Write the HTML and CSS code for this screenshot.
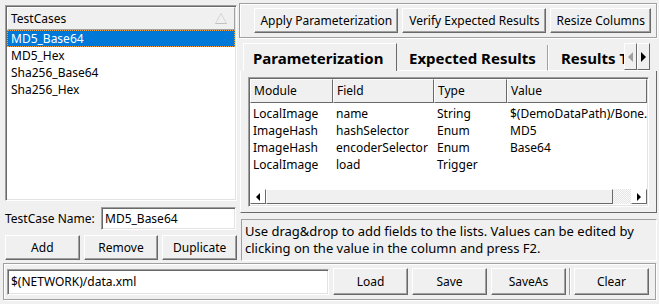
FILE: index.html
```html
<!DOCTYPE html>
<html lang="en">
<head>
    <meta charset="UTF-8">
    <title>Test Cases</title>
    <link rel="stylesheet" href="styles.css">
</head>
<body>
    <div class="app">
        <div class="top">
            <div class="left">
                <div class="listbox">
                    <div class="list-head">TestCases<span class="sort"></span></div>
                    <div class="list">
                        <div class="row selected">MD5_Base64</div>
                        <div class="row">MD5_Hex</div>
                        <div class="row">Sha256_Base64</div>
                        <div class="row">Sha256_Hex</div>
                    </div>
                </div>
                <div class="name-row">
                    <label for="tcName">TestCase Name:</label>
                    <input class="entry" id="tcName" type="text" value="MD5_Base64">
                </div>
                <div class="btn-row">
                    <button class="btn">Add</button>
                    <button class="btn">Remove</button>
                    <button class="btn">Duplicate</button>
                </div>
            </div>

            <div class="right">
                <div class="toolbar">
                    <button class="btn wide">Apply Parameterization</button>
                    <button class="btn wide">Verify Expected Results</button>
                    <button class="btn">Resize Columns</button>
                </div>

                <div class="notebook">
                    <div class="tabs">
                        <div class="tab active">Parameterization</div>
                        <div class="tab">Expected Results</div>
                        <div class="tab last">Results Table</div>
                        <div class="tab-arrows">
                            <span class="arrow prev off"></span>
                            <span class="arrow next"></span>
                        </div>
                    </div>
                    <div class="pane">
                        <div class="table">
                            <div class="thead">
                                <div class="th c1">Module</div>
                                <div class="th c2">Field</div>
                                <div class="th c3">Type</div>
                                <div class="th c4">Value</div>
                            </div>
                            <div class="tbody">
                                <div class="tr"><span class="c1">LocalImage</span><span class="c2">name</span><span class="c3">String</span><span class="c4">$(DemoDataPath)/Bone.</span></div>
                                <div class="tr"><span class="c1">ImageHash</span><span class="c2">hashSelector</span><span class="c3">Enum</span><span class="c4">MD5</span></div>
                                <div class="tr"><span class="c1">ImageHash</span><span class="c2">encoderSelector</span><span class="c3">Enum</span><span class="c4">Base64</span></div>
                                <div class="tr"><span class="c1">LocalImage</span><span class="c2">load</span><span class="c3">Trigger</span><span class="c4"></span></div>
                            </div>
                            <div class="hscroll">
                                <span class="sbtn prev"></span>
                                <span class="thumb"></span>
                                <span class="track"></span>
                                <span class="sbtn next"></span>
                            </div>
                        </div>
                    </div>
                </div>

                <div class="info">Use drag&amp;drop to add fields to the lists. Values can be edited by clicking on the value in the column and press F2.</div>
            </div>
        </div>

        <div class="bottom">
            <input class="entry path" type="text" value="$(NETWORK)/data.xml">
            <button class="btn file">Load</button>
            <button class="btn file">Save</button>
            <button class="btn file">SaveAs</button>
            <span class="sep"></span>
            <button class="btn file">Clear</button>
        </div>
    </div>
</body>
</html>
```

FILE: styles.css
```css
body {
    margin: 0;
    background-color: #f0f0f0;
    font-family: 'Noto Sans', 'Open Sans', sans-serif;
    font-size: 12px;
    color: #000;
}
.app {
    width: 659px;
    height: 304px;
    overflow: hidden;
}
.top {
    display: flex;
    height: 263px;
}

/* buttons and entries, windows classic look */
.btn {
    font: inherit;
    color: #000;
    background-color: #f0f0f0;
    height: 25px;
    padding: 0 6px;
    border: 1px solid;
    border-color: #fff #696969 #696969 #fff;
    box-shadow: inset -1px -1px 0 #a0a0a0;
    cursor: pointer;
}
.entry {
    font: inherit;
    color: #000;
    background-color: #fff;
    box-sizing: border-box;
    padding: 0 3px;
    border: 1px solid;
    border-color: #a0a0a0 #fff #fff #a0a0a0;
    box-shadow: inset 1px 1px 0 #696969, inset -1px -1px 0 #e3e3e3;
    outline: none;
}

/* left column */
.left {
    width: 232px;
    padding: 5px 2px 0 5px;
    display: flex;
    flex-direction: column;
    flex-shrink: 0;
}
.listbox {
    height: 196px;
    box-sizing: border-box;
    background-color: #fff;
    border: 1px solid;
    border-color: #a0a0a0 #fff #fff #a0a0a0;
    box-shadow: inset 1px 1px 0 #696969, inset -1px -1px 0 #e3e3e3;
    padding: 1px;
}
.list-head {
    height: 23px;
    box-sizing: border-box;
    line-height: 21px;
    padding-left: 3px;
    background-color: #f0f0f0;
    border-right: 1px solid #a0a0a0;
    border-bottom: 1px solid #a0a0a0;
    border-top: 1px solid #fff;
    border-left: 1px solid #fff;
    display: flex;
    justify-content: space-between;
    align-items: center;
}
.sort {
    width: 0;
    height: 0;
    margin-right: 7px;
    border-left: 6px solid transparent;
    border-right: 6px solid transparent;
    border-bottom: 11px solid #c0c0c0;
    position: relative;
}
.sort::after {
    content: "";
    position: absolute;
    left: -5px;
    top: 1px;
    border-left: 5px solid transparent;
    border-right: 5px solid transparent;
    border-bottom: 9px solid #f0f0f0;
}
.row {
    height: 17px;
    line-height: 17px;
    padding-left: 4px;
    white-space: nowrap;
}
.row.selected {
    background-color: #0078d7;
    color: #fff;
    outline: 1px dotted #f6a23b;
    outline-offset: -1px;
}
.name-row {
    display: flex;
    align-items: center;
    margin-top: 5px;
    height: 24px;
}
.name-row label {
    width: 96px;
}
.name-row .entry {
    width: 135px;
    height: 23px;
}
.btn-row {
    display: flex;
    gap: 4px;
    margin-top: 5px;
}
.btn-row .btn {
    flex: 1;
}

/* right column */
.right {
    flex: 1;
    padding: 3px 3px 0 0;
    display: flex;
    flex-direction: column;
}
.toolbar {
    height: 35px;
    box-sizing: border-box;
    border: 1px solid #a0a0a0;
    box-shadow: inset 1px 1px 0 #fff, 1px 1px 0 #fff;
    display: flex;
    align-items: center;
    justify-content: flex-end;
    gap: 4px;
    padding-right: 5px;
}
.toolbar .btn.wide {
    width: 144px;
}
.toolbar .btn {
    width: 101px;
    padding: 0;
    flex-shrink: 0;
}
.notebook {
    margin-top: 5px;
    margin-left: 1px;
}
.tabs {
    display: flex;
    height: 28px;
    align-items: flex-end;
    padding-left: 3px;
}
.tab {
    height: 26px;
    line-height: 26px;
    font-size: 15px;
    font-weight: bold;
    padding: 0 10px;
    border-right: 1px solid #a0a0a0;
    box-shadow: 1px 0 0 #fff;
    border-bottom: 1px solid #fff;
    box-sizing: border-box;
    white-space: nowrap;
}
.tab.active {
    height: 28px;
    line-height: 28px;
    width: 154px;
    border-top: 1px solid #fff;
    border-left: 1px solid #fff;
    border-right: 1px solid #696969;
    border-bottom: none;
    box-shadow: none;
    padding-left: 9px;
}
.tab:nth-child(2) {
    width: 151px;
    padding-left: 12px;
}
.tab.last {
    width: 76px;
    overflow: hidden;
    border-right: none;
    box-shadow: none;
    padding-left: 13px;
}
.tab-arrows {
    display: flex;
    height: 28px;
    border-bottom: 1px solid #fff;
    box-sizing: border-box;
}
.arrow {
    width: 13px;
    height: 27px;
    box-sizing: border-box;
    border: 1px solid;
    border-color: #fff #696969 #696969 #fff;
    display: flex;
    align-items: center;
    justify-content: center;
}
.arrow::before, .sbtn::before {
    content: "";
    width: 0;
    height: 0;
    border-top: 5px solid transparent;
    border-bottom: 5px solid transparent;
}
.prev::before {
    border-right: 5px solid #000;
}
.next::before {
    border-left: 5px solid #000;
}
.arrow.off::before {
    border-right-color: #a0a0a0;
}
.pane {
    height: 142px;
    box-sizing: border-box;
    border: 1px solid;
    border-top: none;
    border-color: #fff #696969 #696969 #fff;
    padding: 6px 7px 0 7px;
}
.table {
    height: 130px;
    box-sizing: border-box;
    background-color: #fff;
    border: 1px solid;
    border-color: #a0a0a0 #fff #fff #a0a0a0;
    box-shadow: inset 1px 1px 0 #696969, inset -1px -1px 0 #e3e3e3;
    padding: 1px;
    display: flex;
    flex-direction: column;
}
.thead {
    display: flex;
    height: 24px;
}
.th {
    box-sizing: border-box;
    background-color: #f0f0f0;
    border: 1px solid;
    border-color: #fff #696969 #696969 #fff;
    line-height: 21px;
    padding-left: 3px;
}
.c1 { width: 83px; }
.c2 { width: 101px; }
.c3 { width: 73px; }
.c4 { flex: 1; white-space: nowrap; overflow: hidden; }
.tbody {
    flex: 1;
    padding-top: 2px;
}
.tr {
    display: flex;
    height: 17px;
    line-height: 17px;
}
.tr span {
    box-sizing: border-box;
    padding-left: 3px;
    white-space: nowrap;
}
.hscroll {
    display: flex;
    height: 15px;
    margin-bottom: 1px;
}
.sbtn {
    width: 16px;
    box-sizing: border-box;
    border: 1px solid;
    border-color: #fff #696969 #696969 #fff;
    display: flex;
    align-items: center;
    justify-content: center;
}
.sbtn::before {
    border-top-width: 4px;
    border-bottom-width: 4px;
}
.sbtn.prev::before { border-right-width: 4px; }
.sbtn.next::before { border-left-width: 4px; }
.thumb {
    width: 347px;
    box-sizing: border-box;
    border: 1px solid;
    border-color: #fff #696969 #696969 #fff;
    background-color: #f0f0f0;
}
.track {
    flex: 1;
    background-color: #f4f4f4;
    background-image: repeating-conic-gradient(#e6e6e6 0 25%, #fafafa 0 50%);
    background-size: 2px 2px;
}
.info {
    margin-top: 6px;
    margin-left: 2px;
    height: 42px;
    box-sizing: border-box;
    border: 1px solid;
    border-color: #a0a0a0 #fff #fff #a0a0a0;
    padding: 3px 3px;
    font-size: 13px;
    line-height: 17px;
}

/* bottom bar */
.bottom {
    margin: 0 3px;
    height: 37px;
    box-sizing: border-box;
    border: 1px solid #a0a0a0;
    box-shadow: inset 1px 1px 0 #fff, 1px 1px 0 #fff;
    display: flex;
    align-items: center;
    padding: 0 6px 0 3px;
    gap: 4px;
}
.entry.path {
    width: 322px;
    height: 26px;
}
.btn.file {
    width: 75px;
    height: 27px;
}
.sep {
    width: 0;
    height: 27px;
    border-left: 1px solid #a0a0a0;
    border-right: 1px solid #fff;
    margin: 0 -1px;
}
```
